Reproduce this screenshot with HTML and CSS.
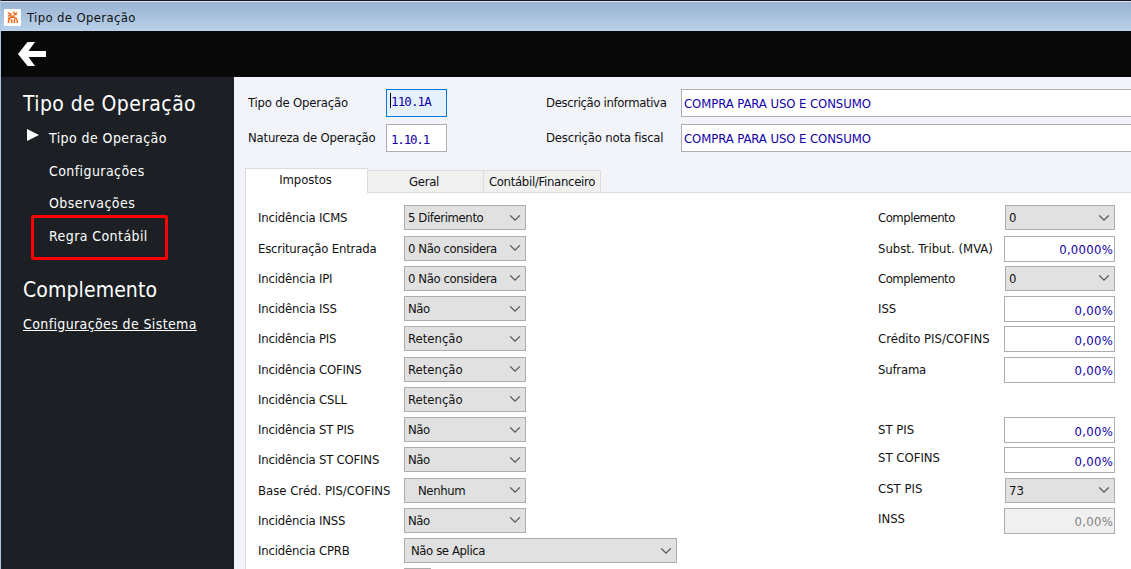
FILE: index.html
```html
<!DOCTYPE html>
<html lang="pt-BR">
<head>
    <meta charset="UTF-8">
    <meta name="viewport" content="width=device-width, initial-scale=1.0">
    <title>Tipo de Operação</title>
    <link rel="stylesheet" href="styles.css">
</head>
<body>
    <svg class="defs" width="0" height="0">
        <symbol id="chevron" viewBox="0 0 12 8">
            <path d="M1.2 1.4 L6 6.2 L10.8 1.4" fill="none" stroke="#555" stroke-width="1.3"/>
        </symbol>
    </svg>

    <div class="window">
        <div class="titlebar">
            <svg class="app-icon" width="17" height="17" viewBox="0 0 17 17">
                <rect width="17" height="17" rx="1" fill="#fff"/>
                <path d="M4 3.5 L7.5 6.5 M9 3 L12.5 6 M4 7.5 L7.5 4.5 M13 3.5 L9.5 6.5 M4 10 L8 7.2 L13 10 M4.5 14 V11.5 L6.5 9.8 M7.7 14 V10.5 M10.4 14 V10 M13.2 14 V10.5" fill="none" stroke="#f5691f" stroke-width="1.5"/>
            </svg>
            <span>Tipo de Operação</span>
        </div>

        <div class="toolbar">
            <svg width="28" height="24" viewBox="0 0 28 24">
                <path d="M0 12 L9.5 0 H17 L10.5 9 H28 V15 H10.5 L17 24 H9.5 Z" fill="#fff"/>
            </svg>
        </div>

        <div class="container">
            <div class="nav">
                <h2>Tipo de Operação</h2>
                <a class="current" href="#tipo">Tipo de Operação</a>
                <a href="#config">Configurações</a>
                <a href="#obs">Observações</a>
                <a class="marked" href="#regra">Regra Contábil</a>
                <h2 class="second">Complemento</h2>
                <a class="link" href="#sistema">Configurações de Sistema</a>
            </div>

            <div class="main">
                <div class="head">
                    <label for="tipo">Tipo de Operação</label>
                    <div class="focused"><input class="code" id="tipo" value="110.1A"></div>
                    <label class="tight" for="descInf">Descrição informativa</label>
                    <input class="desc" id="descInf" value="COMPRA PARA USO E CONSUMO">
                    <label for="natureza">Natureza de Operação</label>
                    <input class="code" id="natureza" value="1.10.1">
                    <label for="descNota">Descrição nota fiscal</label>
                    <input class="desc" id="descNota" value="COMPRA PARA USO E CONSUMO">
                </div>

                <div class="tabs">
                    <div class="tab active">Impostos</div>
                    <div class="tab">Geral</div>
                    <div class="tab">Contábil/Financeiro</div>
                </div>

                <div class="panel">
                    <div class="fields">
                        <label>Incidência ICMS</label>
                        <div class="select"><span>5 Diferimento</span><svg><use href="#chevron"/></svg></div>
                        <label>Escrituração Entrada</label>
                        <div class="select"><span>0 Não considera</span><svg><use href="#chevron"/></svg></div>
                        <label>Incidência IPI</label>
                        <div class="select"><span>0 Não considera</span><svg><use href="#chevron"/></svg></div>
                        <label>Incidência ISS</label>
                        <div class="select"><span>Não</span><svg><use href="#chevron"/></svg></div>
                        <label>Incidência PIS</label>
                        <div class="select loose"><span>Retenção</span><svg><use href="#chevron"/></svg></div>
                        <label>Incidência COFINS</label>
                        <div class="select loose"><span>Retenção</span><svg><use href="#chevron"/></svg></div>
                        <label>Incidência CSLL</label>
                        <div class="select loose"><span>Retenção</span><svg><use href="#chevron"/></svg></div>
                        <label>Incidência ST PIS</label>
                        <div class="select"><span>Não</span><svg><use href="#chevron"/></svg></div>
                        <label>Incidência ST COFINS</label>
                        <div class="select"><span>Não</span><svg><use href="#chevron"/></svg></div>
                        <label class="loose">Base Créd. PIS/COFINS</label>
                        <div class="select indent"><span>Nenhum</span><svg><use href="#chevron"/></svg></div>
                        <label>Incidência INSS</label>
                        <div class="select"><span>Não</span><svg><use href="#chevron"/></svg></div>
                        <label>Incidência CPRB</label>
                        <div class="select wide"><span>Não se Aplica</span><svg><use href="#chevron"/></svg></div>
                        <label></label>
                        <div class="select small"></div>
                    </div>

                    <div class="fields right">
                        <label class="tight">Complemento</label>
                        <div class="select"><span>0</span><svg><use href="#chevron"/></svg></div>
                        <label class="loose">Subst. Tribut. (MVA)</label>
                        <input class="num" value="0,0000%">
                        <label class="tight">Complemento</label>
                        <div class="select"><span>0</span><svg><use href="#chevron"/></svg></div>
                        <label class="loose">ISS</label>
                        <input class="num" value="0,00%">
                        <label class="loose">Crédito PIS/COFINS</label>
                        <input class="num" value="0,00%">
                        <label>Suframa</label>
                        <input class="num" value="0,00%">
                        <div class="blank"></div>
                        <label class="loose">ST PIS</label>
                        <input class="num" value="0,00%">
                        <label class="up loose">ST COFINS</label>
                        <input class="num" value="0,00%">
                        <label class="up loose">CST PIS</label>
                        <div class="select loose"><span>73</span><svg><use href="#chevron"/></svg></div>
                        <label class="up loose">INSS</label>
                        <input class="num" value="0,00%" disabled>
                    </div>
                </div>
            </div>
        </div>
    </div>
</body>
</html>
```
FILE: styles.css
```css
* {
    box-sizing: border-box;
}

body {
    margin: 0;
    font-family: "DejaVu Sans Condensed", "DejaVu Sans", sans-serif;
    font-stretch: condensed;
    font-size: 13px;
    letter-spacing: -0.4px;
    color: #111;
    overflow: hidden;
}

.defs {
    position: absolute;
}

.window {
    height: 569px;
    display: flex;
    flex-direction: column;
    border-top: 1px solid #17181c;
    border-left: 1px solid #a9c6e3;
}

.titlebar {
    height: 30px;
    flex: none;
    display: flex;
    align-items: center;
    gap: 6px;
    padding: 2px 0 0 3px;
    border-top: 1px solid #dce6f1;
    background: linear-gradient(#98b3d2, #b9d1ea);
    letter-spacing: 0.35px;
    white-space: nowrap;
}

.toolbar {
    height: 46px;
    flex: none;
    padding: 11px 0 0 17px;
    background-color: #080808;
}

.container {
    flex: 1;
    min-height: 0;
    display: flex;
}

.nav {
    width: 233px;
    flex: none;
    background-color: #1c1f24;
    color: #fff;
    padding: 14px 0 0 22px;
}

.nav h2 {
    margin: 0 0 5px;
    font-size: 21px;
    line-height: 26px;
    font-weight: normal;
    letter-spacing: 0.4px;
}

.nav a {
    display: block;
    position: relative;
    padding-left: 26px;
    font-size: 14px;
    line-height: 32.7px;
    letter-spacing: 0.42px;
    color: #fff;
    text-decoration: none;
}

.nav a.current::before {
    content: "";
    position: absolute;
    left: 4px;
    top: 7px;
    border-left: 12px solid #fff;
    border-top: 6.5px solid transparent;
    border-bottom: 6.5px solid transparent;
}

/* highlight around the menu entry */
.nav a.marked::after {
    content: "";
    position: absolute;
    box-sizing: border-box;
    left: 8px;
    top: -5px;
    width: 137px;
    height: 45px;
    border: 3px solid #f00;
    border-radius: 2px;
}

.nav h2.second {
    margin-top: 24px;
    letter-spacing: 0.1px;
}

.nav a.link {
    padding-left: 0;
    letter-spacing: 0.38px;
    text-decoration: underline;
}

.main {
    flex: 1;
    min-width: 0;
    background-color: #f3f4fa;
}

.head {
    display: grid;
    grid-template-columns: 138px 160px 135px 1fr;
    grid-auto-rows: 28px;
    row-gap: 7px;
    padding: 12px 0 0 14px;
}

.head label {
    line-height: 28px;
}

label {
    letter-spacing: -0.2px;
    white-space: nowrap;
}

label.tight {
    letter-spacing: -0.5px;
}

.loose,
label.loose {
    letter-spacing: 0;
}

.head label.tight {
    letter-spacing: -0.37px;
}

input {
    display: block;
    height: 28px;
    margin: 0;
    padding: 1px 2px 0;
    border: 1px solid #acaeb4;
    border-radius: 0;
    background-color: #fff;
    color: #1200a8;
    font: inherit;
    letter-spacing: inherit;
}

input.code {
    width: 61px;
    padding: 2px 4px 0;
    font-family: "DejaVu Sans Mono", monospace;
    font-size: 12.5px;
    letter-spacing: -1.2px;
}

input.desc {
    width: 480px;
    letter-spacing: -0.08px;
}

.focused {
    position: relative;
}

.focused input.code {
    padding: 0 4px 4px;
    border-color: #0078d7;
    background-color: #e5f1fc;
    letter-spacing: -0.9px;
}

/* text cursor */
.focused::after {
    content: "";
    position: absolute;
    left: 4px;
    top: 4px;
    width: 1px;
    height: 15px;
    background-color: #000;
}

.tabs {
    display: flex;
    align-items: flex-end;
    height: 25px;
    margin: 16px 0 0 11px;
    border-bottom: 1px solid #dcdcde;
}

.tab {
    width: 117px;
    height: 22px;
    line-height: 22px;
    text-align: center;
    white-space: nowrap;
    letter-spacing: -0.3px;
    background-color: #f0f0f0;
    border: 1px solid #dcdcde;
    border-left: none;
    border-bottom: none;
}

.tab:nth-child(2) {
    width: 116px;
    padding-right: 3px;
}

.tab.active {
    width: 123px;
    height: 25px;
    line-height: 22px;
    margin-bottom: -1px;
    padding-right: 2px;
    letter-spacing: -0.1px;
    background-color: #fff;
    border-left: 1px solid #dcdcde;
}

.panel {
    display: flex;
    height: 377px;
    margin-left: 11px;
    padding: 12.3px 0 0 12px;
    background-color: #fff;
    border-left: 1px solid #dcdcde;
    overflow: hidden;
}

.fields {
    width: 620px;
    flex: none;
    display: grid;
    grid-template-columns: 146px 1fr;
    grid-auto-rows: 30.27px;
    align-content: start;
}

.fields.right {
    width: 240px;
    grid-template-columns: 127px 1fr;
}

.fields label {
    line-height: 26px;
}

.fields label.up {
    margin-top: -2px;
}

.blank {
    grid-column: span 2;
}

.select {
    width: 122px;
    height: 25px;
    display: flex;
    justify-content: space-between;
    align-items: center;
    padding: 0 4px 0 3px;
    background-color: #e1e1e1;
    border: 1px solid #adadad;
    white-space: nowrap;
}

.select svg {
    width: 12px;
    height: 8px;
}

.select.indent {
    padding-left: 13px;
}

.select.wide {
    width: 273px;
    padding-left: 6px;
}

.select.small {
    width: 27px;
}

.right .select {
    width: 110px;
}

input.num {
    width: 111px;
    height: 26px;
    margin-left: -1px;
    padding: 2px 1px 0;
    text-align: right;
    letter-spacing: 0.25px;
}

input.num:disabled {
    background-color: #f0f0f0;
    color: #838383;
}
```
